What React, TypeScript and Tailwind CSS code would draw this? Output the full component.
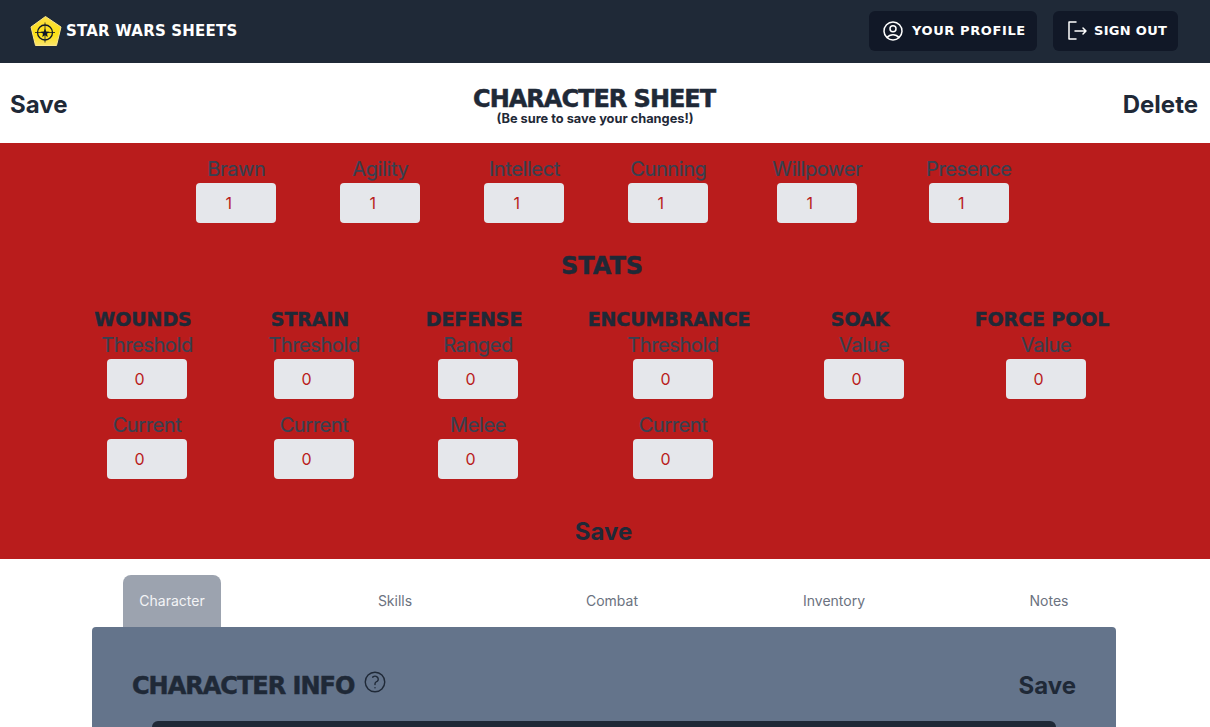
const display = "font-['DejaVu_Sans',sans-serif] font-bold"
const heavy = '[-webkit-text-stroke:0.5px_#1f2937]'

const attributes = ['Brawn', 'Agility', 'Intellect', 'Cunning', 'Willpower', 'Presence']

const stats = [
  { title: 'WOUNDS', width: 'w-[100px]', fields: ['Threshold', 'Current'] },
  { title: 'STRAIN', width: 'w-[102px]', fields: ['Threshold', 'Current'] },
  { title: 'DEFENSE', width: 'w-[94px]', fields: ['Ranged', 'Melee'] },
  { title: 'ENCUMBRANCE', width: 'w-[164px]', fields: ['Threshold', 'Current'] },
  { title: 'SOAK', width: 'w-[86px]', fields: ['Value'] },
  { title: 'FORCE POOL', width: 'w-[146px]', fields: ['Value'] },
]

const tabs = [
  { name: 'Character', width: 'w-[98px]' },
  { name: 'Skills', width: 'w-[108px]' },
  { name: 'Combat', width: 'w-[86px]' },
  { name: 'Inventory', width: 'w-[118px]' },
  { name: 'Notes', width: 'w-[72px]' },
]

function Field({ label, value }: { label: string; value: number }) {
  return (
    <div className="flex flex-col items-center">
      <label className="whitespace-nowrap pb-[2px] text-xl leading-6 tracking-[-0.4px] text-[#374151] [-webkit-text-stroke:0.2px_#374151]">{label}</label>
      <input
        type="number"
        readOnly
        value={value}
        className="h-10 w-20 rounded-sm bg-[#e5e7eb] text-center text-base text-[#b91c1c] outline-none"
      />
    </div>
  )
}

function Logo() {
  return (
    <svg viewBox="0 0 32 32" className="h-8 w-8">
      <defs>
        <linearGradient id="logo-fill" x1="0" y1="0" x2="0" y2="1">
          <stop offset="0" stopColor="#fde047" />
          <stop offset="0.6" stopColor="#fde012" />
          <stop offset="1" stopColor="#fbe56a" />
        </linearGradient>
      </defs>
      <path d="M15.5 1.5 31 12 26.5 30.5 5.5 30.5 1 12Z" fill="url(#logo-fill)" stroke="#fde68a" strokeLinejoin="round" />
      <circle cx="15" cy="17.5" r="7.5" fill="none" stroke="#111827" strokeWidth="1.3" />
      <path d="M15 7.5v20M5 17.5h20" stroke="#111827" strokeWidth="0.8" />
      <path d="m15 13.5 1.2 3 3.3.3-2.5 2 .8 3.2-2.8-1.7-2.8 1.7.8-3.2-2.5-2 3.3-.3Z" fill="#111827" />
    </svg>
  )
}

export default function App() {
  return (
    <div className="min-h-screen bg-white font-['Inter',sans-serif] text-[#1f2937]">
      <nav className="flex h-[63px] items-center justify-between bg-[#1f2937] pb-px pl-[30px] pr-8">
        <div className="flex items-center gap-1">
          <Logo />
          <span className={`${display} text-[15px] tracking-[0.2px] text-white`}>STAR WARS SHEETS</span>
        </div>
        <div className="flex items-center gap-4">
          <button className="flex h-10 w-[168px] items-center gap-[7px] rounded-md bg-[#111827] pl-3 text-white">
            <svg viewBox="0 0 24 24" fill="none" stroke="currentColor" strokeWidth="1.5" className="h-6 w-6">
              <path strokeLinecap="round" strokeLinejoin="round" d="M17.982 18.725A7.488 7.488 0 0012 15.75a7.488 7.488 0 00-5.982 2.975m11.963 0a9 9 0 10-11.963 0m11.963 0A8.966 8.966 0 0112 21a8.966 8.966 0 01-5.982-2.275M15 9.75a3 3 0 11-6 0 3 3 0 016 0z" />
            </svg>
            <span className={`${display} text-[13px] tracking-[0.6px]`}>YOUR PROFILE</span>
          </button>
          <button className="flex h-10 w-[125px] items-center gap-[5px] rounded-md bg-[#111827] pl-3 text-white">
            <svg viewBox="0 0 24 24" fill="none" stroke="currentColor" strokeWidth="1.5" className="h-6 w-6">
              <path strokeLinecap="round" strokeLinejoin="round" d="M11 3H4v17h7M10 12h11m0 0-3-3m3 3-3 3" />
            </svg>
            <span className={`${display} text-[13px] tracking-[0.3px]`}>SIGN OUT</span>
          </button>
        </div>
      </nav>

      <header className="flex h-20 items-center justify-between pl-2.5 pr-3 pt-1">
        <button className="text-2xl font-bold">Save</button>
        <div className="flex flex-col items-center">
          <h1 className={`${display} ${heavy} mr-0.5 text-2xl leading-[27px] tracking-[-1px]`}>CHARACTER SHEET</h1>
          <p className="text-[12.8px] font-bold leading-3">(Be sure to save your changes!)</p>
        </div>
        <button className="text-2xl font-bold">Delete</button>
      </header>

      <section className="flex h-[416px] flex-col bg-[#b91c1c] pt-3.5">
        <div className="flex items-center justify-center gap-16 pr-[2px]">
          {attributes.map((name) => (
            <Field key={name} label={name} value={1} />
          ))}
        </div>
        <h2 className={`${display} ${heavy} mt-[29px] pr-[6px] text-center text-2xl leading-7`}>STATS</h2>
        <div className="mt-[26px] flex items-start gap-[66px] pl-[97px]">
          {stats.map((stat) => (
            <div key={stat.title} className={`flex ${stat.width} flex-col items-center`}>
              <h3 className={`${display} ${heavy} whitespace-nowrap pr-2 text-[19px] leading-[27px] tracking-[-0.1px]`}>{stat.title}</h3>
              <div className="flex flex-col gap-3.5">
                {stat.fields.map((field) => (
                  <Field key={field} label={field} value={0} />
                ))}
              </div>
            </div>
          ))}
        </div>
        <button className="mt-auto pb-[11px] pr-[3px] text-2xl font-bold">Save</button>
      </section>

      <div className="flex h-[68px] items-end gap-[120px] pl-[123px]">
        {tabs.map((tab, i) => (
          <button
            key={tab.name}
            className={`h-[52px] ${tab.width} text-sm ${i === 0 ? 'rounded-t-lg bg-[#9ca3af] text-[#f3f4f6]' : 'text-[#6b7280]'}`}
          >
            {tab.name}
          </button>
        ))}
      </div>

      <section className="ml-[92px] w-[1024px] rounded-t bg-[#64748b] px-10 pt-[41px]">
        <div className="flex items-center justify-between">
          <div className="flex items-start gap-[8px]">
            <h2 className={`${display} ${heavy} text-2xl leading-9 tracking-[-1px]`}>CHARACTER INFO</h2>
            <svg viewBox="0 0 24 24" fill="none" stroke="currentColor" strokeWidth="1.3" className="mt-px h-[26px] w-[26px]">
              <path strokeLinecap="round" strokeLinejoin="round" d="M9.879 7.519c1.171-1.025 3.071-1.025 4.242 0 1.172 1.025 1.172 2.687 0 3.712-.203.179-.43.326-.67.442-.745.361-1.45.999-1.45 1.827v.75M21 12a9 9 0 11-18 0 9 9 0 0118 0zm-9 5.25h.008v.008H12v-.008z" />
            </svg>
          </div>
          <button className="text-2xl font-bold">Save</button>
        </div>
        <div className="mx-5 mt-[17px] h-32 rounded-md bg-[#1f2937]" />
      </section>
    </div>
  )
}
